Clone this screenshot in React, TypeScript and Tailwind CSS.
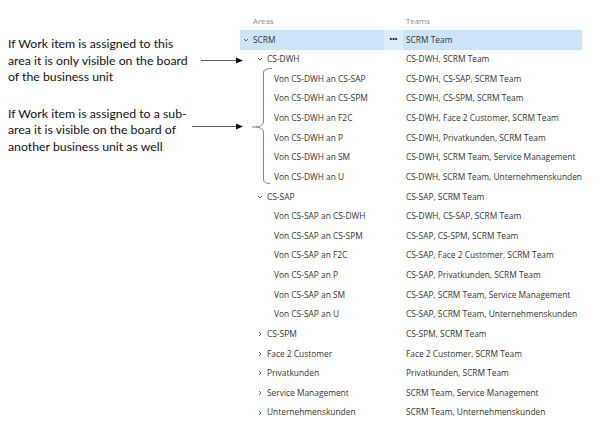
import React from 'react';

type Row = { name: string; teams: string; level: number; chevron?: 'open' | 'closed'; selected?: boolean };

const rows: Row[] = [
  { name: 'SCRM', teams: 'SCRM Team', level: 0, chevron: 'open', selected: true },
  { name: 'CS-DWH', teams: 'CS-DWH, SCRM Team', level: 1, chevron: 'open' },
  { name: 'Von CS-DWH an CS-SAP', teams: 'CS-DWH, CS-SAP, SCRM Team', level: 2 },
  { name: 'Von CS-DWH an CS-SPM', teams: 'CS-DWH, CS-SPM, SCRM Team', level: 2 },
  { name: 'Von CS-DWH an F2C', teams: 'CS-DWH, Face 2 Customer, SCRM Team', level: 2 },
  { name: 'Von CS-DWH an P', teams: 'CS-DWH, Privatkunden, SCRM Team', level: 2 },
  { name: 'Von CS-DWH an SM', teams: 'CS-DWH, SCRM Team, Service Management', level: 2 },
  { name: 'Von CS-DWH an U', teams: 'CS-DWH, SCRM Team, Unternehmenskunden', level: 2 },
  { name: 'CS-SAP', teams: 'CS-SAP, SCRM Team', level: 1, chevron: 'open' },
  { name: 'Von CS-SAP an CS-DWH', teams: 'CS-DWH, CS-SAP, SCRM Team', level: 2 },
  { name: 'Von CS-SAP an CS-SPM', teams: 'CS-SAP, CS-SPM, SCRM Team', level: 2 },
  { name: 'Von CS-SAP an F2C', teams: 'CS-SAP, Face 2 Customer, SCRM Team', level: 2 },
  { name: 'Von CS-SAP an P', teams: 'CS-SAP, Privatkunden, SCRM Team', level: 2 },
  { name: 'Von CS-SAP an SM', teams: 'CS-SAP, SCRM Team, Service Management', level: 2 },
  { name: 'Von CS-SAP an U', teams: 'CS-SAP, SCRM Team, Unternehmenskunden', level: 2 },
  { name: 'CS-SPM', teams: 'CS-SPM, SCRM Team', level: 1, chevron: 'closed' },
  { name: 'Face 2 Customer', teams: 'Face 2 Customer, SCRM Team', level: 1, chevron: 'closed' },
  { name: 'Privatkunden', teams: 'Privatkunden, SCRM Team', level: 1, chevron: 'closed' },
  { name: 'Service Management', teams: 'SCRM Team, Service Management', level: 1, chevron: 'closed' },
  { name: 'Unternehmenskunden', teams: 'SCRM Team, Unternehmenskunden', level: 1, chevron: 'closed' },
];

const indent = ['pl-[3px]', 'pl-[17px]', 'pl-[34px]'];

function Chevron({ kind }: { kind: 'open' | 'closed' }) {
  return kind === 'open' ? (
    <svg width="6" height="6" viewBox="0 0 6 6" className="mr-[4px] shrink-0">
      <path d="M1 2 L3 4 L5 2" fill="none" stroke="#555" strokeWidth="0.9" />
    </svg>
  ) : (
    <svg width="6" height="6" viewBox="0 0 6 6" className="mr-[4px] shrink-0">
      <path d="M2 1 L4 3 L2 5" fill="none" stroke="#555" strokeWidth="0.9" />
    </svg>
  );
}

export default function App() {
  return (
    <div className="relative w-[600px] h-[432px] bg-white overflow-hidden flex" style={{ fontFamily: '"Open Sans", sans-serif' }}>
      {/* Annotations */}
      <div className="w-[240px] shrink-0 pl-[8px] pt-[36px] text-[#111] text-[12.3px] leading-[16.5px]" style={{ fontFamily: 'Lato, sans-serif' }}>
        <p>If Work item is assigned to this<br />area it is only visible on the board<br />of the business unit</p>
        <p className="mt-[20px]">If Work item is assigned to a sub-<br />area it is visible on the board of<br />another business unit as well</p>
      </div>

      {/* Area tree */}
      <div className="w-[342px] pt-[13px] text-[8.4px] text-[#333]">
        <div className="flex h-[17px] items-center text-[#888] text-[7.8px]">
          <div className="w-[144px] pl-[13px]">Areas</div>
          <div className="w-[19px]" />
          <div className="pl-[3px]">Teams</div>
        </div>
        {rows.map((r) => (
          <div key={r.name} className={`flex h-[19.63px] items-center ${r.selected ? 'bg-[#cde4f7]' : ''}`}>
            <div className={`w-[144px] flex items-center whitespace-nowrap ${indent[r.level]}`}>
              {r.chevron && <Chevron kind={r.chevron} />}
              <span>{r.name}</span>
            </div>
            <div className={`w-[19px] h-full flex items-center justify-center font-bold text-[#222] text-[7px] ${r.selected ? 'bg-[#deedfa]' : ''}`}>
              {r.selected ? '•••' : ''}
            </div>
            <div className="pl-[3px] whitespace-nowrap">{r.teams}</div>
          </div>
        ))}
      </div>

      {/* Arrows and bracket */}
      <svg className="absolute left-0 top-0 pointer-events-none" width="600" height="432">
        <line x1="201" y1="60.5" x2="238" y2="60.5" stroke="#333" strokeWidth="0.8" />
        <path d="M236 57.5 L243 60.5 L236 63.5 Z" fill="#111" />
        <line x1="192" y1="126.5" x2="238" y2="126.5" stroke="#333" strokeWidth="0.8" />
        <path d="M236 123.5 L243 126.5 L236 129.5 Z" fill="#111" />
        <path d="M272 68.5 Q264 68.5 263.5 72 L263.5 122 Q263 126.5 256 127 L252 127 M256 127 Q263 127.5 263.5 132 L263.5 180 Q264 183.5 270 183.5" fill="none" stroke="#777" strokeWidth="0.9" />
      </svg>
    </div>
  );
}
